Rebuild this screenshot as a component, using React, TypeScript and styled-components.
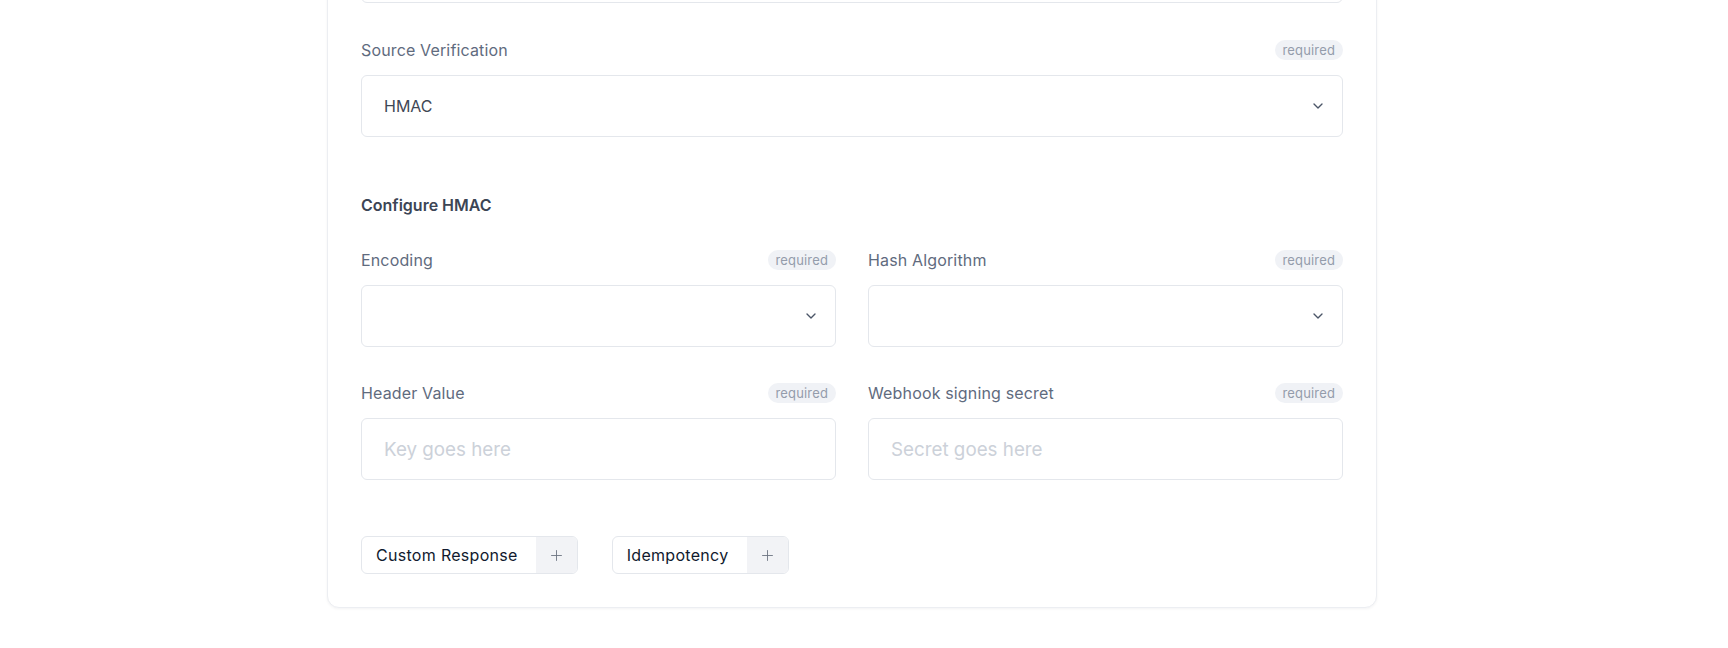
import React from "react";
import styled, { createGlobalStyle } from "styled-components";
import { ChevronDown, Plus } from "lucide-react";

const Global = createGlobalStyle`
  html, body { margin: 0; padding: 0; background: #ffffff; }
  body { font-family: Inter, "Noto Sans", sans-serif; -webkit-font-smoothing: antialiased; }
  * { box-sizing: border-box; }
`;

const Page = styled.div`
  width: 1728px;
  height: 648px;
  overflow: hidden;
  padding-left: 327px;
`;

const Card = styled.div`
  width: 1050px;
  margin-top: -93px;
  padding: 33px;
  background: #fff;
  border: 1px solid #eceef2;
  border-radius: 12px;
  box-shadow: 0 1px 3px rgba(15, 23, 42, 0.05);
  display: flex;
  flex-direction: column;
`;

const Field = styled.div<{ $mt?: number }>`
  display: flex;
  flex-direction: column;
  margin-top: ${(p) => p.$mt ?? 0}px;
`;

const LabelRow = styled.div`
  height: 24px;
  margin-bottom: 13px;
  display: flex;
  align-items: center;
  justify-content: space-between;
`;

const Label = styled.span`
  font-size: 16px;
  letter-spacing: 0.15px;
  color: #5f6b7e;
`;

const Badge = styled.span`
  height: 20px;
  padding: 0 8px;
  border-radius: 999px;
  background: #f0f2f6;
  color: #949cab;
  font-size: 13px;
  letter-spacing: 0.15px;
  line-height: 20px;
`;

const Box = styled.div<{ $placeholder?: boolean }>`
  height: 62px;
  border: 1px solid #e4e7ec;
  border-radius: 6px;
  padding: 0 16px 0 22px;
  display: flex;
  align-items: center;
  justify-content: space-between;
  font-size: ${(p) => (p.$placeholder ? 18.8 : 16)}px;
  color: ${(p) => (p.$placeholder ? "#ccd1d9" : "#3f4756")};
`;

const Heading = styled.div`
  height: 24px;
  margin-top: 56px;
  line-height: 24px;
  font-size: 16px;
  font-weight: 600;
  color: #3c4555;
`;

const Grid = styled.div`
  display: grid;
  grid-template-columns: 1fr 1fr;
  column-gap: 32px;
  row-gap: 34px;
  margin-top: 31px;
`;

const ButtonRow = styled.div`
  display: flex;
  gap: 34px;
  margin-top: 56px;
`;

const AddButton = styled.div`
  height: 38px;
  display: flex;
  align-items: stretch;
  border: 1px solid #e4e7ec;
  border-radius: 6px;
  overflow: hidden;
  background: #fff;
`;

const AddLabel = styled.span`
  display: flex;
  align-items: center;
  padding: 0 18px 0 14px;
  font-size: 16px;
  letter-spacing: 0.3px;
  color: #111a2e;
`;

const AddIcon = styled.span`
  width: 41px;
  display: flex;
  align-items: center;
  justify-content: center;
  background: #f2f3f6;
  color: #6b7280;
`;

const Chevron = () => <ChevronDown size={16} strokeWidth={2} color="#4b5567" />;

const FieldHead = ({ label }: { label: string }) => (
  <LabelRow>
    <Label>{label}</Label>
    <Badge>required</Badge>
  </LabelRow>
);

export default function App() {
  return (
    <>
      <Global />
      <Page>
        <Card>
          <Box />
          <Field $mt={35}>
            <FieldHead label="Source Verification" />
            <Box>
              <span>HMAC</span>
              <Chevron />
            </Box>
          </Field>
          <Heading>Configure HMAC</Heading>
          <Grid>
            <Field>
              <FieldHead label="Encoding" />
              <Box>
                <span />
                <Chevron />
              </Box>
            </Field>
            <Field>
              <FieldHead label="Hash Algorithm" />
              <Box>
                <span />
                <Chevron />
              </Box>
            </Field>
            <Field>
              <FieldHead label="Header Value" />
              <Box $placeholder>Key goes here</Box>
            </Field>
            <Field>
              <FieldHead label="Webhook signing secret" />
              <Box $placeholder>Secret goes here</Box>
            </Field>
          </Grid>
          <ButtonRow>
            <AddButton>
              <AddLabel>Custom Response</AddLabel>
              <AddIcon>
                <Plus size={17} strokeWidth={1.25} />
              </AddIcon>
            </AddButton>
            <AddButton>
              <AddLabel>Idempotency</AddLabel>
              <AddIcon>
                <Plus size={17} strokeWidth={1.25} />
              </AddIcon>
            </AddButton>
          </ButtonRow>
        </Card>
      </Page>
    </>
  );
}
